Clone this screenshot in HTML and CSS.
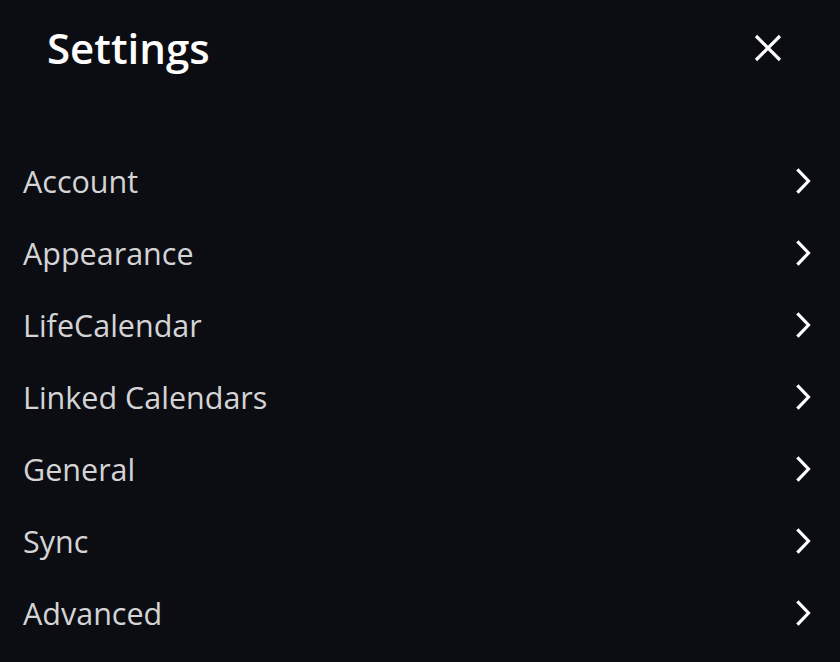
FILE: index.html
```html
<!DOCTYPE html>
<html>
<head>
<meta charset="utf-8">
<link rel="stylesheet" href="styles.css">
</head>
<body>
<div class="panel">
  <header class="head">
    <h1 class="title">Settings</h1>
    <button class="close" aria-label="Close">
      <svg width="28" height="28" viewBox="0 0 28 28"><path d="M2 2 L26 26 M26 2 L2 26" stroke="#fff" stroke-width="3.2" stroke-linecap="butt" fill="none"/></svg>
    </button>
  </header>
  <ul class="list">
    <li class="item"><span>Account</span><svg class="chev" width="16" height="26" viewBox="0 0 16 26"><path d="M2.5 2.5 L12.5 13 L2.5 23.5" stroke="#fff" stroke-width="3.2" fill="none" stroke-linecap="square"/></svg></li>
    <li class="item"><span>Appearance</span><svg class="chev" width="16" height="26" viewBox="0 0 16 26"><path d="M2.5 2.5 L12.5 13 L2.5 23.5" stroke="#fff" stroke-width="3.2" fill="none" stroke-linecap="square"/></svg></li>
    <li class="item"><span>LifeCalendar</span><svg class="chev" width="16" height="26" viewBox="0 0 16 26"><path d="M2.5 2.5 L12.5 13 L2.5 23.5" stroke="#fff" stroke-width="3.2" fill="none" stroke-linecap="square"/></svg></li>
    <li class="item"><span>Linked Calendars</span><svg class="chev" width="16" height="26" viewBox="0 0 16 26"><path d="M2.5 2.5 L12.5 13 L2.5 23.5" stroke="#fff" stroke-width="3.2" fill="none" stroke-linecap="square"/></svg></li>
    <li class="item"><span>General</span><svg class="chev" width="16" height="26" viewBox="0 0 16 26"><path d="M2.5 2.5 L12.5 13 L2.5 23.5" stroke="#fff" stroke-width="3.2" fill="none" stroke-linecap="square"/></svg></li>
    <li class="item"><span>Sync</span><svg class="chev" width="16" height="26" viewBox="0 0 16 26"><path d="M2.5 2.5 L12.5 13 L2.5 23.5" stroke="#fff" stroke-width="3.2" fill="none" stroke-linecap="square"/></svg></li>
    <li class="item"><span>Advanced</span><svg class="chev" width="16" height="26" viewBox="0 0 16 26"><path d="M2.5 2.5 L12.5 13 L2.5 23.5" stroke="#fff" stroke-width="3.2" fill="none" stroke-linecap="square"/></svg></li>
  </ul>
</div>
</body>
</html>
```
FILE: styles.css
```css
html, body {
  margin: 0;
  padding: 0;
  background: #0c0d12;
  font-family: "Open Sans", "Noto Sans", sans-serif;
}
.panel {
  width: 840px;
  height: 662px;
  box-sizing: border-box;
}
.head {
  display: flex;
  justify-content: space-between;
  align-items: center;
  height: 96px;
  padding: 0 58px 0 47px;
}
.title {
  margin: 0;
  color: #fff;
  font-size: 42px;
  font-weight: 600;
  line-height: 1;
}
.close {
  background: none;
  border: 0;
  padding: 0;
  width: 28px;
  height: 28px;
  display: flex;
}
.list {
  list-style: none;
  margin: 0;
  padding: 49px 0 0 0;
}
.item {
  display: flex;
  justify-content: space-between;
  align-items: center;
  height: 72px;
  padding: 0 28px 0 23px;
  color: #d4d4d6;
  font-size: 30.5px;
  font-weight: 500;
}
.chev {
  display: block;
}
```
